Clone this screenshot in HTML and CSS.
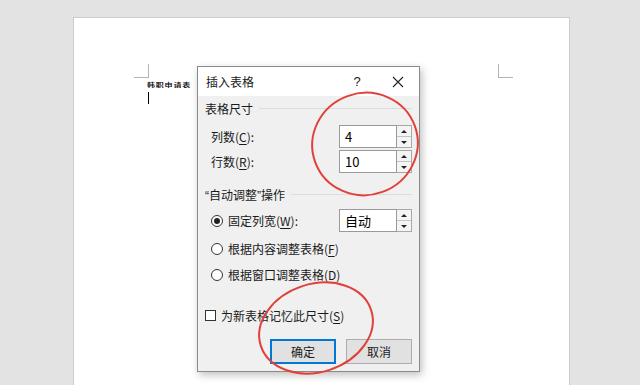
FILE: index.html
```html
<!DOCTYPE html>
<html lang="zh">
<head>
    <meta charset="UTF-8">
    <title>插入表格</title>
    <link rel="stylesheet" href="styles.css">
</head>
<body>
    <div class="page">
        <div class="marks">
            <span class="mark mark-left"></span>
            <span class="mark mark-right"></span>
        </div>
        <div class="doc-text">韩职申请表</div>
        <div class="caret"></div>
    </div>

    <!-- Insert table dialog -->
    <div class="dialog">
        <div class="dialog-title">
            <span class="title-text">插入表格</span>
            <span class="title-help">?</span>
            <span class="title-close">
                <svg width="12" height="12" viewBox="0 0 12 12"><path d="M1 1L11 11M11 1L1 11" stroke="#222" stroke-width="1.1" fill="none"/></svg>
            </span>
        </div>
        <div class="dialog-body">
            <div class="group-head"><span>表格尺寸</span><i></i></div>
            <div class="row indent">
                <span class="label">列数(<u>C</u>):</span>
                <div class="spin">
                    <div class="spin-input">4</div>
                    <div class="spin-btns"><b class="up"></b><b class="down"></b></div>
                </div>
            </div>
            <div class="row indent row-2">
                <span class="label">行数(<u>R</u>):</span>
                <div class="spin">
                    <div class="spin-input">10</div>
                    <div class="spin-btns"><b class="up"></b><b class="down"></b></div>
                </div>
            </div>

            <div class="group-head group-2"><span><span class="q">“</span>自动调整<span class="q">”</span>操作</span><i></i></div>
            <div class="row radio-row first">
                <span class="radio checked"></span>
                <span class="label">固定列宽(<u>W</u>):</span>
                <div class="spin">
                    <div class="spin-input">自动</div>
                    <div class="spin-btns"><b class="up"></b><b class="down"></b></div>
                </div>
            </div>
            <div class="row radio-row second">
                <span class="radio"></span>
                <span class="label">根据内容调整表格(<u>F</u>)</span>
            </div>
            <div class="row radio-row third">
                <span class="radio"></span>
                <span class="label">根据窗口调整表格(<u>D</u>)</span>
            </div>

            <div class="row check-row">
                <span class="check"></span>
                <span class="label">为新表格记忆此尺寸(<u>S</u>)</span>
            </div>

            <div class="buttons">
                <button class="btn btn-ok">确定</button>
                <button class="btn">取消</button>
            </div>
        </div>
    </div>

    <!-- red hand-drawn circles -->
    <svg class="marks-overlay" width="640" height="385" viewBox="0 0 640 385">
        <ellipse cx="365" cy="144" rx="53" ry="51" transform="rotate(-20 365 144)" fill="none" stroke="#e2413b" stroke-width="2"/>
        <ellipse cx="316" cy="328" rx="58" ry="44" transform="rotate(-18 316 328)" fill="none" stroke="#e2413b" stroke-width="2"/>
    </svg>
</body>
</html>
```

FILE: styles.css
```css
body {
    margin: 0;
    background: #e3e3e3;
    font-family: "Noto Sans CJK SC", "Noto Sans", sans-serif;
    overflow: hidden;
    height: 385px;
}

.page {
    margin: 17px 0 0 73px;
    width: 497px;
    height: 380px;
    background: #fff;
    border: 1px solid #cdcdcd;
    border-bottom: none;
    padding-top: 46px;
    box-sizing: border-box;
}

.marks {
    display: flex;
    padding-left: 60px;
    height: 14px;
}

.mark {
    display: block;
    width: 14px;
    height: 13px;
    border-bottom: 1px solid #b4b4b4;
}

.mark-left {
    border-right: 1px solid #b4b4b4;
}

.mark-right {
    margin-left: 349px;
    border-left: 1px solid #b4b4b4;
}

.doc-text {
    margin: 4px 0 0 73px;
    font-size: 8px;
    font-weight: bold;
    line-height: 8px;
    color: #111;
    letter-spacing: 0.8px;
    transform: scaleY(0.65);
    transform-origin: left top;
}

.caret {
    margin: 2px 0 0 74px;
    width: 1px;
    height: 12px;
    background: #000;
}

/* dialog */
.dialog {
    position: absolute;
    left: 197px;
    top: 66px;
    width: 223px;
    height: 306px;
    box-sizing: border-box;
    border: 1px solid #8a8a8a;
    background: #f0f0f0;
    box-shadow: 2px 3px 8px rgba(0,0,0,0.25);
    font-size: 12px;
    color: #1a1a1a;
}

.dialog-title {
    height: 29px;
    background: #fff;
    display: flex;
    align-items: center;
    padding-left: 8px;
}

.title-text {
    flex: 1;
}

.title-help {
    width: 14px;
    text-align: center;
    font-family: "Liberation Sans", sans-serif;
    font-size: 13px;
    margin-right: 28px;
}

.title-close {
    width: 12px;
    height: 12px;
    display: flex;
    margin-right: 15px;
}

.dialog-body {
    padding: 0 7px 0 7px;
}

.group-head {
    display: flex;
    align-items: center;
    height: 24px;
}

.group-head .q {
    font-family: "Liberation Sans", sans-serif;
}

.group-head i {
    flex: 1;
    height: 1px;
    background: #dcdcdc;
    margin-left: 6px;
    margin-top: 1px;
}

.group-2 {
    margin-top: 8px;
}

.row {
    display: flex;
    align-items: center;
    height: 25px;
}

.row.indent {
    padding-left: 6px;
    margin-top: 4px;
}

.row.row-2 {
    margin-top: 0;
}

.row .label {
    flex: 1;
    white-space: nowrap;
}

u {
    text-decoration-thickness: 1px;
    text-underline-offset: 2px;
}

.spin {
    display: flex;
    height: 23px;
}

.spin-input {
    width: 58px;
    box-sizing: border-box;
    border: 1px solid #9a9a9a;
    background: #fff;
    padding: 3px 0 0 5px;
    font-size: 13px;
    line-height: 16px;
    color: #000;
}

.spin-btns {
    width: 15px;
    display: flex;
    flex-direction: column;
    border: 1px solid #a8a8a8;
    border-left: none;
    box-sizing: border-box;
    background: #f4f4f4;
}

.spin-btns b {
    flex: 1;
    display: flex;
    align-items: center;
    justify-content: center;
}

.spin-btns b.up {
    border-bottom: 1px solid #c4c4c4;
}

.spin-btns b.up::before {
    content: "";
    border-left: 3px solid transparent;
    border-right: 3px solid transparent;
    border-bottom: 3px solid #222;
}

.spin-btns b.down::before {
    content: "";
    border-left: 3px solid transparent;
    border-right: 3px solid transparent;
    border-top: 3px solid #222;
}

.radio-row {
    padding-left: 6px;
}

.radio-row.first {
    margin-top: 2px;
}

.radio-row.second {
    margin-top: 3px;
}

.radio-row.third {
    margin-top: 1px;
}

.radio {
    width: 12px;
    height: 12px;
    box-sizing: border-box;
    border: 1px solid #333;
    border-radius: 50%;
    background: #fff;
    margin-right: 5px;
    display: flex;
    align-items: center;
    justify-content: center;
}

.radio.checked::after {
    content: "";
    width: 6px;
    height: 6px;
    border-radius: 50%;
    background: #222;
}

.check-row {
    margin-top: 16px;
}

.check {
    width: 11px;
    height: 11px;
    box-sizing: border-box;
    border: 1px solid #333;
    background: #fff;
    margin-right: 5px;
}

.buttons {
    display: flex;
    justify-content: flex-end;
    gap: 10px;
    margin-top: 11px;
}

.btn {
    width: 66px;
    height: 25px;
    border: 1px solid #adadad;
    background: #e1e1e1;
    font-family: "Noto Sans CJK SC", sans-serif;
    font-size: 12px;
    color: #1a1a1a;
    padding: 0;
}

.btn-ok {
    border: 2px solid #0078d7;
}

.marks-overlay {
    position: absolute;
    left: 0;
    top: 0;
    pointer-events: none;
}
```
